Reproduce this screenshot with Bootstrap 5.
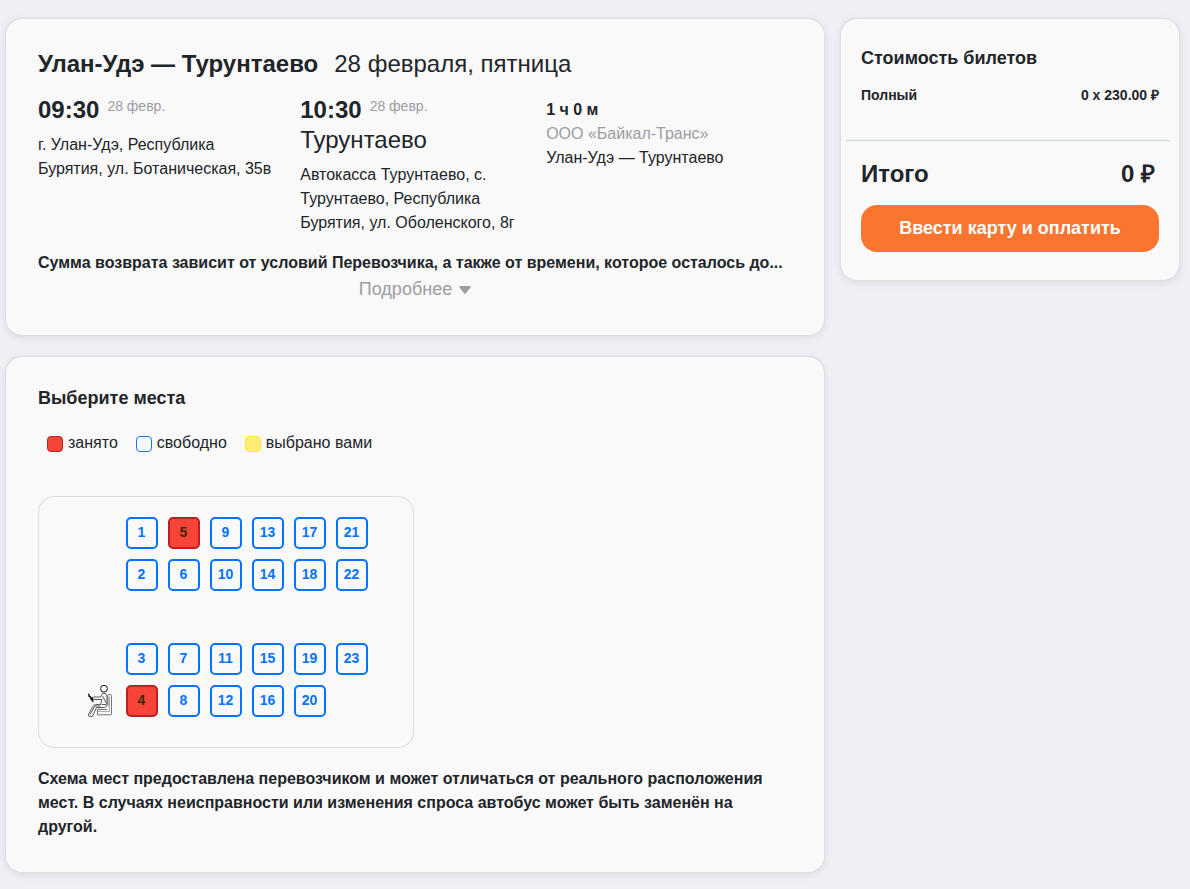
<!DOCTYPE html>
<html lang="ru">
<head>
<meta charset="utf-8">
<meta name="viewport" content="width=device-width, initial-scale=1">
<title>Улан-Удэ — Турунтаево</title>
<link href="https://cdn.jsdelivr.net/npm/bootstrap@5.3.0/dist/css/bootstrap.min.css" rel="stylesheet">
<style>
  body { background: #eff0f5; font-family: "Liberation Sans", Arial, sans-serif; color: #212529; }
  .page-grid { display: grid; grid-template-columns: minmax(0, 1fr) 338px; gap: 17px; align-items: start; padding: 19px 11px 16px 6px; }
  .panel { background: #f9f9f9; border-radius: 16px; box-shadow: 0 0 1px 1px #dddddd, 0 2px 10px rgba(0,0,0,.1); }
  .panel-main { padding: 27px 32px 32px; }
  .panel-side { padding: 25px 20px 28px; }
  .stack { display: grid; gap: 22px; }
  .big { font-size: 24px; line-height: 30px; }
  .head { font-size: 18px; line-height: 28px; font-weight: 700; margin: 0; }
  .dim { color: #9c9ca3; }
  .day { font-size: 14px; line-height: 22px; }
  .trip-title { padding-top: 3px; }
  .trip-cols { display: grid; grid-template-columns: 16fr 15fr 15fr; margin-top: 16px; margin-bottom: 16px; }
  .trip-cols > div { padding-right: 24px; }
  .trip-info { padding-top: 3px; }
  .more { border: 0; background: none; padding: 0; font-size: 18px; line-height: 28px; }
  .more svg { margin-left: 2px; }
  .swatch { width: 16px; height: 16px; border-radius: 4px; border: 1px solid #0d78ff; margin-top: 1px; }
  .swatch.taken { background: #f64438; border-color: #c01f1f; }
  .swatch.chosen { background: #fdee73; border-color: #fdea3b; }
  .legend { gap: 18px; margin: 19px 0 41px; padding-left: 9px; }
  .legend span { gap: 5px; }
  .bus { display: inline-grid; grid-template-columns: repeat(7, 32px); grid-auto-rows: 32px; gap: 10px; padding: 20px 45px 30px; border: 1px solid #ddd; border-radius: 16px; vertical-align: top; }
  .seat { padding: 0 1px 2px 0; border: 2px solid #0573ff; border-radius: 5px; background: #f9f9f9; color: #0573ff; font-size: 14px; line-height: 20px; font-weight: 700; }
  .seat:disabled { background: #f64438; border-color: #c01f1f; color: #432608; }
  .first { grid-column: 2; }
  .aisle { grid-column: 1 / -1; }
  .note { line-height: 24px; margin: 19px 0 1px; }
  .fare { font-size: 14px; line-height: 20px; margin-top: 13px; }
  .rule { height: 1px; margin: 35px -11px 18px -15px; background: #c9d5e6; }
  .pay { width: 100%; border: 0; border-radius: 16px; background: #fc752e; color: #fff; font-size: 18px; line-height: 27px; font-weight: 700; padding: 10px; margin-top: 16px; }
  @media (max-width: 900px) { .page-grid { grid-template-columns: minmax(0, 1fr); } }
</style>
</head>
<body>
<div class="page-grid">
  <main class="stack">
    <section class="panel panel-main">
      <h1 class="trip-title big d-flex flex-wrap gap-3 m-0"><b>Улан-Удэ — Турунтаево</b><span class="fw-normal">28 февраля, пятница</span></h1>
      <div class="trip-cols">
        <div>
          <div class="big d-flex gap-2"><b>09:30</b><span class="dim day">28 февр.</span></div>
          <div class="mt-2">г. Улан-Удэ, Республика Бурятия, ул. Ботаническая, 35в</div>
        </div>
        <div>
          <div class="big d-flex gap-2"><b>10:30</b><span class="dim day">28 февр.</span></div>
          <div class="big">Турунтаево</div>
          <div class="mt-2">Автокасса Турунтаево, с. Турунтаево, Республика Бурятия, ул. Оболенского, 8г</div>
        </div>
        <div class="trip-info pe-0">
          <b class="d-block">1 ч 0 м</b>
          <div class="dim">ООО «Байкал-Транс»</div>
          <div>Улан-Удэ — Турунтаево</div>
        </div>
      </div>
      <div class="fw-bold text-truncate">Сумма возврата зависит от условий Перевозчика, а также от времени, которое осталось до...</div>
      <div class="text-center">
        <button type="button" class="more dim">Подробнее <svg width="12" height="8" viewBox="0 0 12 8" aria-hidden="true"><path d="M1 0h10q1.600 0 .6 1.300L7 7.300q-1 1-2 0L.4 1.300Q-.6 0 1 0z" fill="#9c9ca3"/></svg></button>
      </div>
    </section>

    <section class="panel panel-main">
      <h2 class="head">Выберите места</h2>
      <div class="legend d-flex flex-wrap">
        <span class="d-flex align-items-center"><i class="swatch taken"></i>занято</span>
        <span class="d-flex align-items-center"><i class="swatch"></i>свободно</span>
        <span class="d-flex align-items-center"><i class="swatch chosen"></i>выбрано вами</span>
      </div>
      <div class="bus">
        <button type="button" class="seat first">1</button>
        <button type="button" class="seat" disabled>5</button>
        <button type="button" class="seat">9</button>
        <button type="button" class="seat">13</button>
        <button type="button" class="seat">17</button>
        <button type="button" class="seat">21</button>
        <button type="button" class="seat first">2</button>
        <button type="button" class="seat">6</button>
        <button type="button" class="seat">10</button>
        <button type="button" class="seat">14</button>
        <button type="button" class="seat">18</button>
        <button type="button" class="seat">22</button>
        <div class="aisle"></div>
        <button type="button" class="seat first">3</button>
        <button type="button" class="seat">7</button>
        <button type="button" class="seat">11</button>
        <button type="button" class="seat">15</button>
        <button type="button" class="seat">19</button>
        <button type="button" class="seat">23</button>
        <svg width="32" height="32" viewBox="0 0 32 32" fill="none" stroke="#333" stroke-width=".8" stroke-linejoin="round" aria-hidden="true">
          <circle cx="20" cy="3.700" r="3.400" stroke="#111" stroke-width="1"/>
          <path d="M24 21V10.500q0-1 1-1h1.500q1 0 1 1v18.500q0 .8-1 .8H13.500v-5.300h9.500" stroke="#555"/>
          <path d="M25.500 12v14.500H14" stroke="#999"/>
          <path d="M18.500 8.500h3l1.500 2.500v8.500q0 2.500-2.500 3h-8L8.500 31.300H5l-.8-1.300 5.300-9.500 2-1h5l1.500-5H10l-3 .5-.3-2 3.300-1h6.500z"/>
          <path d="M18.500 11l4 7.500M17.500 19.500h4.500M16.500 21H11L6 29.500"/>
          <path d="M4.300 8.800l2 3.500 3 4.500M4.300 10.700l2.800 1.500M6.200 12.700l3 1.300" stroke="#000" stroke-width="1.200"/>
        </svg>
        <button type="button" class="seat" disabled>4</button>
        <button type="button" class="seat">8</button>
        <button type="button" class="seat">12</button>
        <button type="button" class="seat">16</button>
        <button type="button" class="seat">20</button>
      </div>
      <p class="note fw-bold">Схема мест предоставлена перевозчиком и может отличаться от реального расположения мест. В случаях неисправности или изменения спроса автобус может быть заменён на другой.</p>
    </section>
  </main>

  <aside class="panel panel-side">
    <h2 class="head">Стоимость билетов</h2>
    <div class="fare d-flex justify-content-between fw-bold"><span>Полный</span><span>0 x 230.00 ₽</span></div>
    <div class="rule"></div>
    <div class="big d-flex justify-content-between fw-bold pe-1"><span>Итого</span><span>0 ₽</span></div>
    <button type="button" class="pay">Ввести карту и оплатить</button>
  </aside>
</div>
<script src="https://cdn.jsdelivr.net/npm/bootstrap@5.3.0/dist/js/bootstrap.bundle.min.js"></script>
</body>
</html>
